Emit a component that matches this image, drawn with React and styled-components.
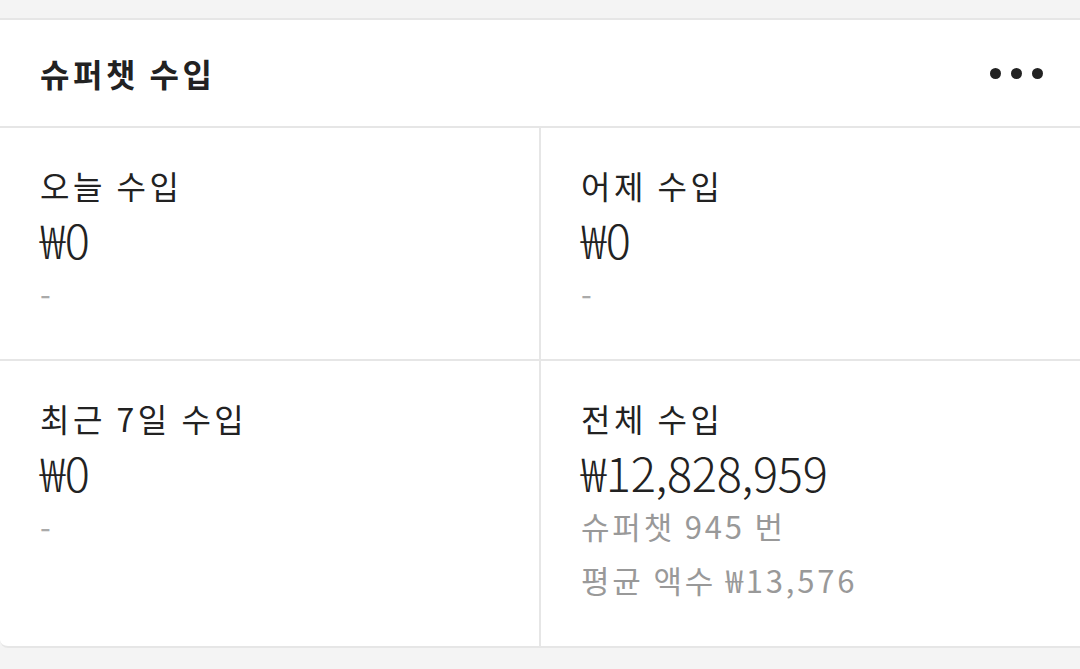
import styled, {createGlobalStyle} from 'styled-components';

const GlobalStyle = createGlobalStyle`
  html, body {
    margin: 0;
    padding: 0;
    background-color: #f4f4f4;
    font-family: "Noto Sans CJK KR", "Noto Sans", sans-serif;
    color: #222;
  }
`;

const Page = styled.div`
  padding-top: 18px;
  height: 669px;
  box-sizing: border-box;
  overflow: hidden;
`;

// 카드: 오른쪽은 화면 밖으로 잘림
const Card = styled.section`
  width: calc(100% + 8px);
  background-color: white;
  border-top: 2px solid #e6e6e6;
  border-bottom: 2px solid #e6e6e6;
  border-radius: 0 0 0 8px;
  box-sizing: border-box;
`;

const Header = styled.header`
  display: flex;
  align-items: center;
  justify-content: space-between;
  height: 106px;
  padding: 0 37px 0 40px;
  border-bottom: 2px solid #e6e6e6;
`;

const Title = styled.h2`
  margin: 0;
  font-size: 32px;
  font-weight: 700;
  letter-spacing: 3.5px;
  color: #222;
`;

const MoreBtn = styled.button`
  display: flex;
  gap: 10px;
  padding: 0;
  border: none;
  background: none;
  margin-right: 8px;
`;

const Dot = styled.span`
  width: 11px;
  height: 11px;
  border-radius: 50%;
  background-color: #222;
`;

const Grid = styled.div`
  display: grid;
  grid-template-columns: 539px 1fr;
`;

const Cell = styled.div`
  padding: 30px 40px 39px 40px;
  border-left: ${(props) => props.right ? '2px solid #e6e6e6' : 'none'};
  border-top: ${(props) => props.bottomRow ? '2px solid #e6e6e6' : 'none'};
`;

const Label = styled.div`
  font-size: 32px;
  line-height: 54px;
  letter-spacing: 3.5px;
  color: #222;
`;

const Value = styled.div`
  font-size: 47px;
  font-weight: 300;
  line-height: 54px;
  letter-spacing: -0.3px;
  color: #222;
`;

const Sub = styled.div`
  font-size: 31px;
  line-height: 54px;
  letter-spacing: 2.8px;
  color: ${(props) => props.dash ? '#aaa' : '#999'};
`;

const items = [
  {label: '오늘 수입', value: '₩0', subs: ['-']},
  {label: '어제 수입', value: '₩0', subs: ['-']},
  {label: '최근 7일 수입', value: '₩0', subs: ['-']},
  {label: '전체 수입', value: '₩12,828,959', subs: ['슈퍼챗 945 번', '평균 액수 ₩13,576']},
];

const App = () => {
  return (
    <Page>
      <GlobalStyle />
      <Card>
        <Header>
          <Title>슈퍼챗 수입</Title>
          <MoreBtn>
            <Dot />
            <Dot />
            <Dot />
          </MoreBtn>
        </Header>
        <Grid>
          {items.map((item, index) =>
            <Cell key={item.label} right={index % 2 === 1} bottomRow={index > 1}>
              <Label>{item.label}</Label>
              <Value>{item.value}</Value>
              {item.subs.map((s) => <Sub key={s} dash={s === '-'}>{s}</Sub>)}
            </Cell>
          )}
        </Grid>
      </Card>
    </Page>
  );
};

export default App;
